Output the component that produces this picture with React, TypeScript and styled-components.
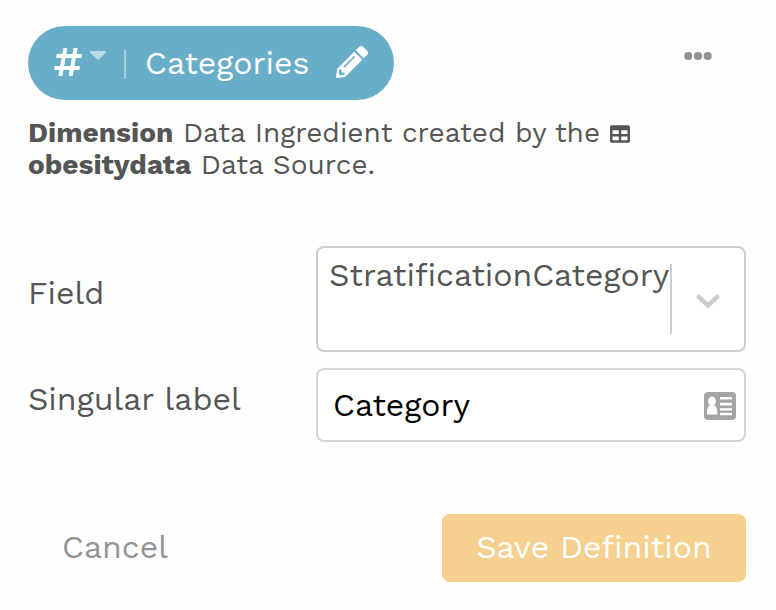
import React from "react";
import styled, { createGlobalStyle } from "styled-components";
import { FaHashtag, FaPencilAlt, FaTable } from "react-icons/fa";

const GlobalStyle = createGlobalStyle`
  * { box-sizing: border-box; }
  body {
    margin: 0;
    background: #fefefe;
    color: #555;
    font-family: "Work Sans", Inter, "Open Sans", sans-serif;
    font-size: 32px;
  }
  svg { display: block; flex: none; }
`;

const Panel = styled.main`
  width: 776px;
  height: 610px;
  padding: 26px 30px 28px 28px;
  display: flex;
  flex-direction: column;
`;

const Header = styled.header`
  display: flex;
  justify-content: space-between;
  height: 74px;
`;

const Pill = styled.div`
  display: flex;
  align-items: center;
  width: 366px;
  height: 74px;
  padding: 0 26px 2px 24px;
  border-radius: 37px;
  background: #69aec9;
  color: #fff;
`;

const Caret = styled.svg`
  margin: -14px 18px 0 6px;
`;

const Divider = styled.span`
  width: 2px;
  height: 29px;
  margin: 5px 19px 0 0;
  background: #a5cedf;
`;

const PillLabel = styled.span`
  width: 191px;
  margin-top: 2px;
`;

const MenuButton = styled.button`
  width: 28px;
  height: 10px;
  margin: 25px 34px 0 0;
  padding: 0;
  border: 0;
  background: none;
`;

const Description = styled.p`
  width: 620px;
  height: 64px;
  margin: 17px 0 0;
  font-size: 28px;
  line-height: 32px;

  svg {
    display: inline-block;
    vertical-align: -2px;
  }
`;

const Form = styled.div`
  display: flex;
  flex-direction: column;
  gap: 16px;
  margin-top: 65px;
`;

const FormRow = styled.div<{ $height: number }>`
  display: flex;
  height: ${(p) => p.$height}px;
`;

const Label = styled.label<{ $top: number }>`
  width: 288px;
  padding-top: ${(p) => p.$top}px;
  line-height: 36px;
`;

const Control = styled.div<{ $tone: string }>`
  display: flex;
  flex: 1;
  border: 2px solid ${(p) => p.$tone};
  border-radius: 8px;
  background: #fff;
`;

const SelectValue = styled.span`
  width: 352px;
  padding: 9px 0 0 11px;
  line-height: 36px;
`;

const SelectArrow = styled.div`
  display: flex;
  align-items: center;
  height: 70px;
  margin-top: 16px;
  padding: 4px 0 0 24px;
  border-left: 2px solid #ccc;
`;

const InputValue = styled.span`
  flex: 1;
  padding: 17px 0 0 15px;
  color: #000;
  line-height: 36px;
`;

const CardIcon = styled.svg`
  margin: 22px 8px 0 0;
`;

const Footer = styled.footer`
  display: flex;
  justify-content: space-between;
  margin-top: 72px;
`;

const Button = styled.button<{ $primary?: boolean }>`
  width: ${(p) => (p.$primary ? 304 : 174)}px;
  height: 68px;
  padding: 0 0 3px;
  border: 0;
  border-radius: 8px;
  background: ${(p) => (p.$primary ? "#f6d08f" : "transparent")};
  color: ${(p) => (p.$primary ? "#fff" : "#939393")};
  font: inherit;
`;

export default function App() {
  return (
    <>
      <GlobalStyle />
      <Panel>
        <Header>
          <Pill>
            <FaHashtag size={32} />
            <Caret width="16" height="9" viewBox="0 0 16 9" fill="#bbd9e5">
              <path d="M1.3 0h13.4c1.1 0 1.6 1.2.8 1.9L9 8.2q-1 .9-2 0L.5 1.9C-.3 1.2.2 0 1.3 0Z" />
            </Caret>
            <Divider />
            <PillLabel>Categories</PillLabel>
            <FaPencilAlt size={32} />
          </Pill>
          <MenuButton aria-label="More options">
            <svg width="28" height="10" viewBox="0 0 28 10" fill="#939393">
              <circle cx="4.2" cy="5" r="4.1" />
              <circle cx="14" cy="5" r="4.1" />
              <circle cx="23.7" cy="5" r="4.1" />
            </svg>
          </MenuButton>
        </Header>
        <Description>
          <b>Dimension</b> Data Ingredient created by the <FaTable size={20} />{" "}
          <b>obesitydata</b> Data Source.
        </Description>
        <Form>
          <FormRow $height={106}>
            <Label $top={29}>Field</Label>
            <Control $tone="#ccc">
              <SelectValue>StratificationCategory</SelectValue>
              <SelectArrow>
                <svg width="24" height="15" viewBox="0 0 24 15" fill="none" stroke="#ccc" strokeWidth="4.4" strokeLinecap="round">
                  <path d="m2.8 2.8 9.2 8.6 9.2-8.6" />
                </svg>
              </SelectArrow>
            </Control>
          </FormRow>
          <FormRow $height={74}>
            <Label $top={13}>Singular label</Label>
            <Control $tone="#d4d4d4">
              <InputValue>Category</InputValue>
              <CardIcon width="32" height="28" viewBox="0 0 32 28">
                <rect width="32" height="28" rx="4" fill="#a5a5a5" />
                <g fill="#fff">
                  <ellipse cx="8" cy="9.2" rx="3.9" ry="4.6" />
                  <path d="M3 22.5v-3c0-3 1.2-5.3 3.2-6.5h3.8c2 1.2 3.2 3.5 3.2 6.5v3Z" />
                  <path d="M16 5h12v2.4H16zM16 10.8h12v2.6H16zM16 16.2h12v2.2H16zM16 20.8h12v2.5H16z" />
                </g>
              </CardIcon>
            </Control>
          </FormRow>
        </Form>
        <Footer>
          <Button>Cancel</Button>
          <Button $primary>Save Definition</Button>
        </Footer>
      </Panel>
    </>
  );
}
